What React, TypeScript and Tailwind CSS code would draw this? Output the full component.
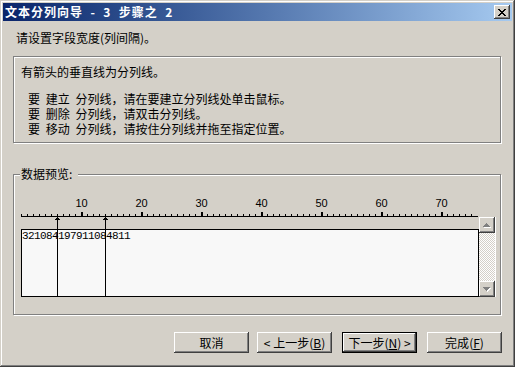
import React from 'react';

const etched = 'border border-[#808080] shadow-[1px_1px_0_#fff,inset_1px_1px_0_#fff]';
const raised =
  'bg-[#d4d0c8] shadow-[inset_-1px_-1px_0_#404040,inset_1px_1px_0_#fff,inset_-2px_-2px_0_#808080]';

// 8x7 close glyph, one string per row
const X_ROWS = ['##....##', '.##..##.', '..####..', '...##...', '..####..', '.##..##.', '##....##'];
const UP_ROWS = ['...#...', '..###..', '.#####.', '#######'];

function Pixels({ rows, fill, dx = 0, dy = 0 }: { rows: string[]; fill: string; dx?: number; dy?: number }) {
  return (
    <>
      {rows.flatMap((row, y) =>
        row.split('').map((c, x) =>
          c === '#' ? <rect key={`${x}-${y}`} x={x + dx} y={y + dy} width={1} height={1} fill={fill} /> : null
        )
      )}
    </>
  );
}

function CloseButton() {
  return (
    <div className={`w-[16px] h-[14px] flex items-center justify-center ${raised}`}>
      <svg width="8" height="7" shapeRendering="crispEdges" className="-ml-[1px]">
        <Pixels rows={X_ROWS} fill="#000" />
      </svg>
    </div>
  );
}

function ScrollButton({ down }: { down?: boolean }) {
  const rows = down ? [...UP_ROWS].reverse() : UP_ROWS;
  return (
    <div className={`w-[16px] h-[16px] flex items-center justify-center ${raised}`}>
      <svg width="8" height="5" shapeRendering="crispEdges" className="-ml-[1px]">
        <Pixels rows={rows} fill="#fff" dx={1} dy={1} />
        <Pixels rows={rows} fill="#808080" />
      </svg>
    </div>
  );
}

function Ruler() {
  const ticks = [];
  for (let i = 0; i <= 75; i++) {
    const x = i * 6;
    if (i > 0 && i % 10 === 0) ticks.push(<rect key={i} x={x} y={17} width={2} height={4} />);
    else ticks.push(<rect key={i} x={x} y={19} width={1} height={2} />);
  }
  return (
    <svg width="458" height="34" shapeRendering="crispEdges" className="block">
      <g fill="#000">
        {ticks}
        <rect x={0} y={21} width={457} height={1} />
      </g>
      {[1, 2, 3, 4, 5, 6, 7].map((n) => (
        <text
          key={n}
          x={n * 60 + 0.5}
          y={12}
          textAnchor="middle"
          fontSize="11"
          fontFamily="Liberation Sans, sans-serif"
          fill="#000"
        >
          {n * 10}
        </text>
      ))}
    </svg>
  );
}

function Breaks() {
  // column breaks after char 6 and char 14
  return (
    <svg width="458" height="102" shapeRendering="crispEdges" className="absolute left-0 top-0 pointer-events-none">
      {[36, 84].map((x) => (
        <g key={x} fill="#000">
          <rect x={x} y={22} width={1} height={80} />
          <rect x={x - 1} y={23} width={3} height={1} />
          <rect x={x - 2} y={24} width={5} height={1} />
        </g>
      ))}
    </svg>
  );
}

function Button({ label, mnemonic, before, after, isDefault, className = '' }: {
  label: string;
  mnemonic?: string;
  before?: string;
  after?: string;
  isDefault?: boolean;
  className?: string;
}) {
  return (
    <div
      className={`w-[75px] h-[21px] flex items-center justify-center whitespace-pre ${raised} ${
        isDefault ? 'border border-black' : ''
      } ${className}`}
    >
      {before}
      {label}
      {mnemonic && (
        <>
          (<span className="underline">{mnemonic}</span>)
        </>
      )}
      {after}
    </div>
  );
}

export default function App() {
  return (
    <div className="w-[515px] h-[367px] bg-[#d4d0c8] p-[3px] flex flex-col text-[12px] leading-[14px] text-black font-['Noto_Sans_CJK_SC',sans-serif] shadow-[inset_-1px_-1px_0_#404040,inset_1px_1px_0_#d4d0c8,inset_-2px_-2px_0_#808080,inset_2px_2px_0_#fff]">
      <div className="h-[18px] flex items-center justify-between pl-[2px] pr-[2px] bg-gradient-to-r from-[#0a246a] to-[#a6caf0]">
        <span className="text-white font-bold tracking-[1px] whitespace-pre">文本分列向导  -  3  步骤之  2</span>
        <CloseButton />
      </div>

      <div className="flex flex-col px-[10px]">
        <p className="mt-[10px] ml-[3px]">请设置字段宽度(列间隔)。</p>

        <div className={`mt-[11px] w-[488px] h-[87px] pl-[7px] pt-[8px] ${etched}`}>
          <p>有箭头的垂直线为分列线。</p>
          <div className="mt-[12px] ml-[7px] leading-[15px] [word-spacing:3px]">
            <p>要 建立 分列线，请在要建立分列线处单击鼠标。</p>
            <p>要 删除 分列线，请双击分列线。</p>
            <p>要 移动 分列线，请按住分列线并拖至指定位置。</p>
          </div>
        </div>

        <div className={`relative mt-[31px] w-[488px] h-[141px] pl-[7px] pt-[20px] flex ${etched}`}>
          <span className="absolute left-[6px] top-[-8px] pl-[1px] pr-[6px] bg-[#d4d0c8]">数据预览:</span>
          <div className="relative w-[458px]">
            <Ruler />
            <div className="h-[68px] border border-black bg-[#f8f8f8] font-['Liberation_Mono',monospace] text-[11px] leading-[12px] tracking-[-0.6px]">
              321084197911084811
            </div>
            <Breaks />
          </div>
          <div className="mt-[22px] w-[17px] h-[80px] flex flex-col border-r border-white">
            <ScrollButton />
            <div className="flex-1 bg-[repeating-conic-gradient(#fff_0_25%,#d4d0c8_0_50%)] bg-[length:2px_2px]" />
            <ScrollButton down />
          </div>
        </div>

        <div className="mt-[17px] flex justify-end">
          <Button label="取消" />
          <Button label="上一步" before="< " mnemonic="B" className="ml-[8px]" />
          <Button label="下一步" mnemonic="N" after=" >" isDefault className="ml-[10px]" />
          <Button label="完成" mnemonic="F" className="ml-[10px]" />
        </div>
      </div>
    </div>
  );
}
